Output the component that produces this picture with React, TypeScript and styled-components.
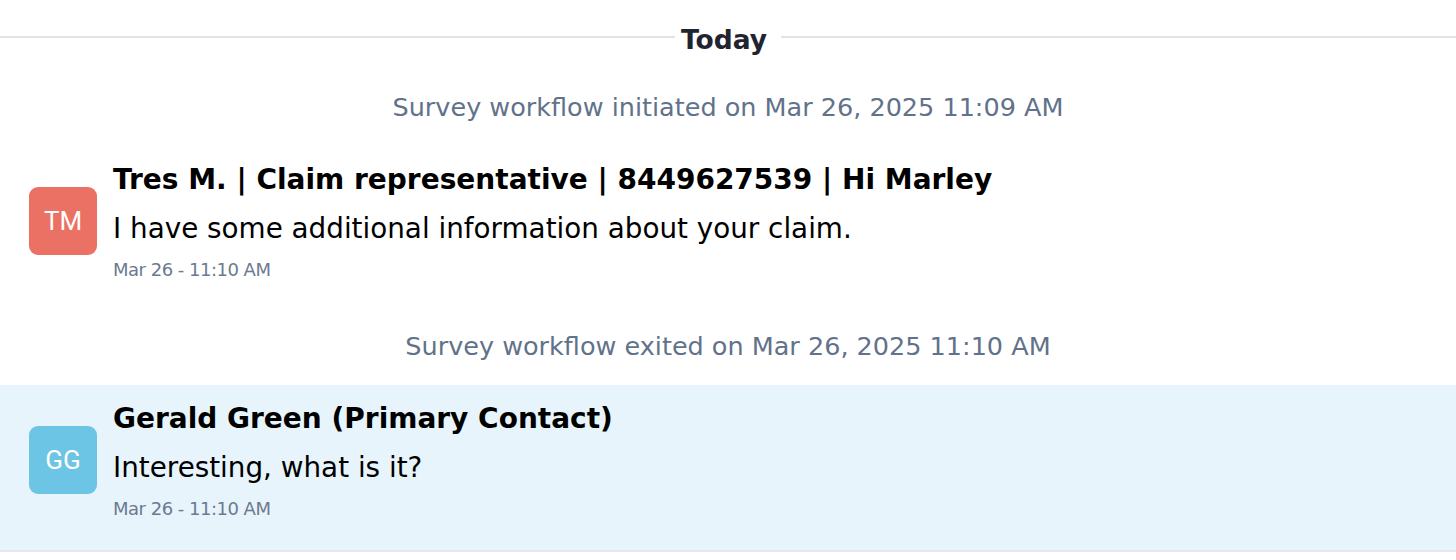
import React from 'react';
import styled, { createGlobalStyle } from 'styled-components';

const GlobalStyle = createGlobalStyle`
  body {
    margin: 0;
    background: #fff;
    font-family: 'DejaVu Sans', 'Open Sans', sans-serif;
  }
`;

const Page = styled.div`
  width: 1456px;
`;

const Divider = styled.div`
  display: flex;
  align-items: center;
  height: 74px;
`;

const Rule = styled.div`
  flex: 1;
  height: 2px;
  background: #e2e3e7;
`;

const DayLabel = styled.div`
  padding: 0 6px;
  margin-top: 5px;
  margin-right: 8px;
  font-size: 26.5px;
  font-weight: 700;
  color: #1f2430;
`;

const SystemLine = styled.div`
  padding: 15px 0 21px;
  text-align: center;
  font-size: 25.5px;
  line-height: 36px;
  color: #61728a;
`;

const MessageRow = styled.div<{ $highlight?: boolean }>`
  display: flex;
  align-items: center;
  gap: 16px;
  padding: 13px 29px 28px;
  background: ${(p) => (p.$highlight ? '#e7f4fb' : 'transparent')};
  border-bottom: 2px solid ${(p) => (p.$highlight ? '#e5e7eb' : 'transparent')};
`;

const Avatar = styled.div<{ $color: string }>`
  width: 68px;
  height: 68px;
  flex: none;
  border-radius: 9px;
  background: ${(p) => p.$color};
  display: flex;
  align-items: center;
  justify-content: center;
  color: #fff;
  font-family: Roboto, 'Liberation Sans', sans-serif;
  font-size: 26px;
`;

const Body = styled.div`
  display: flex;
  flex-direction: column;
`;

const Sender = styled.div`
  font-size: 28px;
  line-height: 42px;
  font-weight: 700;
  color: #000;
`;

const Text = styled.div`
  margin-top: 8px;
  font-size: 27.8px;
  line-height: 40px;
  color: #000;
`;

const Stamp = styled.div`
  margin-top: 8px;
  font-size: 18px;
  line-height: 26px;
  letter-spacing: -0.5px;
  color: #6b7a90;
`;

interface Message {
  initials: string;
  color: string;
  sender: string;
  text: string;
  time: string;
  highlight?: boolean;
}

const messages: Message[] = [
  {
    initials: 'TM',
    color: '#ea7164',
    sender: 'Tres M. | Claim representative | 8449627539 | Hi Marley',
    text: 'I have some additional information about your claim.',
    time: 'Mar 26 - 11:10 AM',
  },
  {
    initials: 'GG',
    color: '#6cc5e5',
    sender: 'Gerald Green (Primary Contact)',
    text: 'Interesting, what is it?',
    time: 'Mar 26 - 11:10 AM',
    highlight: true,
  },
];

const MessageItem: React.FC<{ m: Message }> = ({ m }) => (
  <MessageRow $highlight={m.highlight}>
    <Avatar $color={m.color}>{m.initials}</Avatar>
    <Body>
      <Sender>{m.sender}</Sender>
      <Text>{m.text}</Text>
      <Stamp>{m.time}</Stamp>
    </Body>
  </MessageRow>
);

const App: React.FC = () => (
  <Page>
    <GlobalStyle />
    <Divider>
      <Rule />
      <DayLabel>Today</DayLabel>
      <Rule />
    </Divider>
    <SystemLine>Survey workflow initiated on Mar 26, 2025 11:09 AM</SystemLine>
    <MessageItem m={messages[0]} />
    <SystemLine>Survey workflow exited on Mar 26, 2025 11:10 AM</SystemLine>
    <MessageItem m={messages[1]} />
  </Page>
);

export default App;
